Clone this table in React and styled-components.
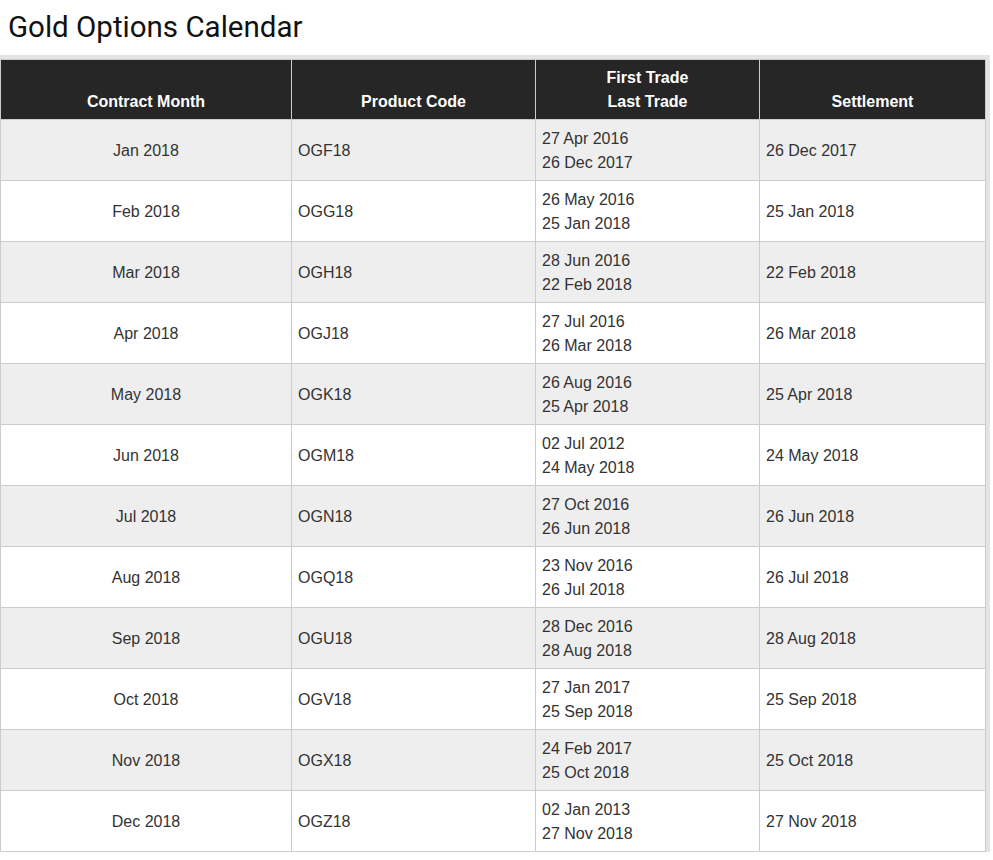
import React from 'react';
import styled, { createGlobalStyle } from 'styled-components';

const GlobalStyle = createGlobalStyle`
    body {
        margin: 0;
        background: #fff;
        font-family: "Liberation Sans", Arial, sans-serif;
    }
`;

const Title = styled.h1`
    margin: 0;
    padding: 11px 8px;
    font-family: Roboto, "Liberation Sans", sans-serif;
    font-weight: 400;
    font-size: 29.5px;
    line-height: 33px;
    color: #111;
`;

const Frame = styled.div`
    width: 990px;
    box-sizing: border-box;
    background: #e4e4e4;
    padding: 4px 5px 0 0;
`;

const Table = styled.table`
    width: 985px;
    border-collapse: collapse;
    table-layout: fixed;
    font-family: "Liberation Sans", Arial, sans-serif;
    font-size: 16px;
    color: #333;
`;

const Head = styled.th`
    width: ${p => p.w}px;
    height: 60px;
    box-sizing: border-box;
    padding: 0 6px 5px;
    background: #262626;
    color: #fff;
    font-weight: 700;
    line-height: 24px;
    text-align: center;
    vertical-align: bottom;
    border: 1px solid #ccc;
`;

const Row = styled.tr`
    background: ${p => (p.odd ? '#eeeeee' : '#ffffff')};
`;

const Cell = styled.td`
    height: 61px;
    box-sizing: border-box;
    padding: 2px 6px 0;
    line-height: 24px;
    text-align: ${p => (p.center ? 'center' : 'left')};
    vertical-align: middle;
    border: 1px solid #ccc;
`;

const rows = [
    ['Jan 2018', 'OGF18', '27 Apr 2016', '26 Dec 2017', '26 Dec 2017'],
    ['Feb 2018', 'OGG18', '26 May 2016', '25 Jan 2018', '25 Jan 2018'],
    ['Mar 2018', 'OGH18', '28 Jun 2016', '22 Feb 2018', '22 Feb 2018'],
    ['Apr 2018', 'OGJ18', '27 Jul 2016', '26 Mar 2018', '26 Mar 2018'],
    ['May 2018', 'OGK18', '26 Aug 2016', '25 Apr 2018', '25 Apr 2018'],
    ['Jun 2018', 'OGM18', '02 Jul 2012', '24 May 2018', '24 May 2018'],
    ['Jul 2018', 'OGN18', '27 Oct 2016', '26 Jun 2018', '26 Jun 2018'],
    ['Aug 2018', 'OGQ18', '23 Nov 2016', '26 Jul 2018', '26 Jul 2018'],
    ['Sep 2018', 'OGU18', '28 Dec 2016', '28 Aug 2018', '28 Aug 2018'],
    ['Oct 2018', 'OGV18', '27 Jan 2017', '25 Sep 2018', '25 Sep 2018'],
    ['Nov 2018', 'OGX18', '24 Feb 2017', '25 Oct 2018', '25 Oct 2018'],
    ['Dec 2018', 'OGZ18', '02 Jan 2013', '27 Nov 2018', '27 Nov 2018'],
];

export default function App() {
    return (
        <>
            <GlobalStyle />
            <Title>Gold Options Calendar</Title>
            <Frame>
                <Table>
                    <thead>
                        <tr>
                            <Head w={291}>Contract Month</Head>
                            <Head w={244}>Product Code</Head>
                            <Head w={224}>First Trade<br />Last Trade</Head>
                            <Head w={226}>Settlement</Head>
                        </tr>
                    </thead>
                    <tbody>
                        {rows.map((r, i) => (
                            <Row key={r[1]} odd={i % 2 === 0}>
                                <Cell center>{r[0]}</Cell>
                                <Cell>{r[1]}</Cell>
                                <Cell>{r[2]}<br />{r[3]}</Cell>
                                <Cell>{r[4]}</Cell>
                            </Row>
                        ))}
                    </tbody>
                </Table>
            </Frame>
        </>
    );
}
